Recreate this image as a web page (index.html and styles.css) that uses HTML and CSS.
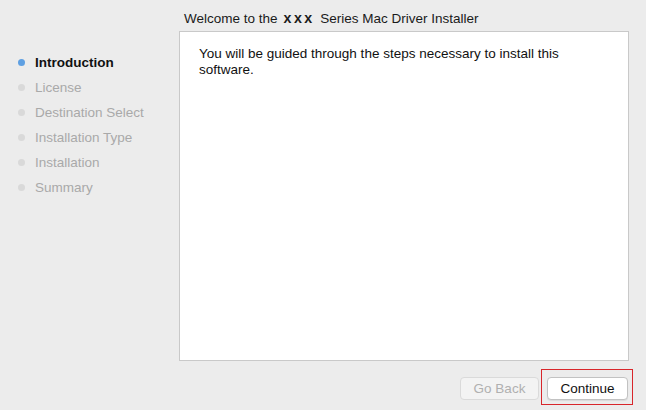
FILE: index.html
```html
<!DOCTYPE html>
<html>
<head>
<meta charset="utf-8">
<link rel="stylesheet" href="styles.css">
</head>
<body>
<div class="window">
  <ul class="steps">
    <li class="step active"><span class="dot"></span>Introduction</li>
    <li class="step"><span class="dot"></span>License</li>
    <li class="step"><span class="dot"></span>Destination Select</li>
    <li class="step"><span class="dot"></span>Installation Type</li>
    <li class="step"><span class="dot"></span>Installation</li>
    <li class="step"><span class="dot"></span>Summary</li>
  </ul>
  <div class="main">
    <div class="title">Welcome to the <span class="xxx">xxx</span> Series Mac Driver Installer</div>
    <div class="panel">
      <p class="intro">You will be guided through the steps necessary to install this software.</p>
    </div>
    <div class="footer">
      <button class="btn disabled">Go Back</button>
      <button class="btn primary">Continue</button>
    </div>
  </div>
</div>
</body>
</html>
```
FILE: styles.css
```css
html, body {
  margin: 0;
  padding: 0;
}
body {
  width: 646px;
  height: 410px;
  background: #ececec;
  font-family: "Liberation Sans", Arial, sans-serif;
  font-size: 13.5px;
  color: #1a1a1a;
  overflow: hidden;
}
.window {
  display: flex;
  height: 410px;
}
.steps {
  list-style: none;
  margin: 0;
  padding: 50px 0 0 18px;
  width: 161px;
}
.step {
  display: flex;
  align-items: center;
  height: 25px;
  color: #a9a9a9;
}
.step.active {
  color: #111111;
  font-weight: bold;
}
.dot {
  width: 7px;
  height: 7px;
  border-radius: 50%;
  background: #d9d9d9;
  margin-right: 10px;
}
.step.active .dot {
  background: #5fa0e2;
}
.main {
  display: flex;
  flex-direction: column;
  width: 450px;
}
.title {
  height: 18px;
  line-height: 18px;
  margin-top: 10px;
  padding-left: 5px;
  color: #1a1a1a;
}
.xxx {
  font-family: "Liberation Mono", monospace;
  font-weight: bold;
  font-size: 14px;
  letter-spacing: 2px;
  margin: 0 2px;
}
.panel {
  margin-top: 3px;
  height: 328px;
  background: #ffffff;
  border: 1px solid #c9c9c9;
  padding: 0 20px 0 19px;
}
.intro {
  margin: 14px 0 0 0;
  line-height: 16px;
  color: #111111;
}
.footer {
  display: flex;
  justify-content: flex-end;
  gap: 8px;
  margin-top: 16px;
  padding-right: 1px;
}
.btn {
  font-family: inherit;
  font-size: 13.5px;
  height: 23px;
  border-radius: 4px;
  padding: 0;
  line-height: 21px;
}
.btn.disabled {
  width: 79px;
  background: #f3f3f3;
  border: 1px solid #dadada;
  color: #b0b0b0;
}
.btn.primary {
  position: relative;
  width: 81px;
  background: #ffffff;
  border: 1px solid #c2c2c2;
  color: #111111;
  box-shadow: 0 1px 1px rgba(0,0,0,0.08);
}
.btn.primary::after {
  content: "";
  position: absolute;
  left: -7px;
  right: -6px;
  top: -9px;
  bottom: -6px;
  border: 1px solid #d8262b;
}
```
